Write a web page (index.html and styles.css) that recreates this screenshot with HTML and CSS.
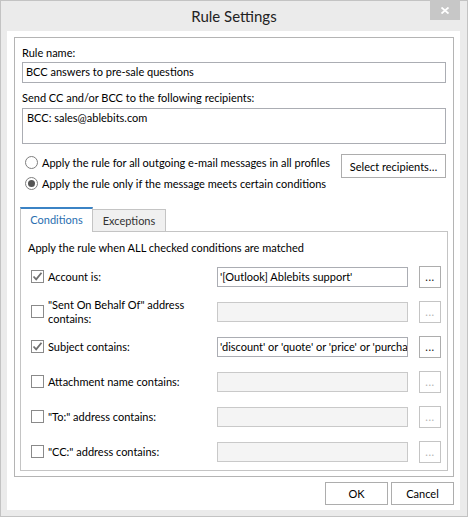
FILE: index.html
```html
<!DOCTYPE html>
<html>
<head>
<meta charset="utf-8">
<link rel="stylesheet" href="styles.css">
</head>
<body>
<div class="window">
  <div class="titlebar">
    <span class="spacer"></span>
    <div class="title">Rule Settings</div>
    <div class="close"><svg width="8" height="7" viewBox="0 0 8 7"><path d="M0.5 0.5 L7.5 6.5 M7.5 0.5 L0.5 6.5" stroke="#fff" stroke-width="1.8" fill="none"/></svg></div>
  </div>
  <div class="client">
    <div class="panel">
      <div class="label">Rule name:</div>
      <div class="field">BCC answers to pre-sale questions</div>
      <div class="label label-send">Send CC and/or BCC to the following recipients:</div>
      <div class="field area">BCC: sales@ablebits.com</div>
      <div class="options">
        <div class="radios">
          <div class="radio-row"><span class="radio"></span><span>Apply the rule for all outgoing e-mail messages in all profiles</span></div>
          <div class="radio-row"><span class="radio on"></span><span>Apply the rule only if the message meets certain conditions</span></div>
        </div>
        <div class="btn select-btn">Select recipients…</div>
      </div>
      <div class="tabs">
        <div class="tab active">Conditions</div>
        <div class="tab">Exceptions</div>
      </div>
      <div class="tabpage">
        <div class="heading">Apply the rule when ALL checked conditions are matched</div>
        <div class="row">
          <span class="check on"><svg width="11" height="11" viewBox="0 0 11 11"><path d="M1.5 5.5 L4.2 8.3 L9.5 1.8" stroke="#6f6f6f" stroke-width="1.8" fill="none"/></svg></span>
          <span class="rlabel">Account is:</span>
          <span class="input">'[Outlook] Ablebits support'</span>
          <span class="dots">...</span>
        </div>
        <div class="row">
          <span class="check"></span>
          <span class="rlabel two">"Sent On Behalf Of" address<br>contains:</span>
          <span class="input off"></span>
          <span class="dots off">...</span>
        </div>
        <div class="row">
          <span class="check on"><svg width="11" height="11" viewBox="0 0 11 11"><path d="M1.5 5.5 L4.2 8.3 L9.5 1.8" stroke="#6f6f6f" stroke-width="1.8" fill="none"/></svg></span>
          <span class="rlabel">Subject contains:</span>
          <span class="input">'discount' or 'quote' or 'price' or 'purchase'</span>
          <span class="dots">...</span>
        </div>
        <div class="row">
          <span class="check"></span>
          <span class="rlabel">Attachment name contains:</span>
          <span class="input off"></span>
          <span class="dots off">...</span>
        </div>
        <div class="row">
          <span class="check"></span>
          <span class="rlabel">"To:" address contains:</span>
          <span class="input off"></span>
          <span class="dots off">...</span>
        </div>
        <div class="row">
          <span class="check"></span>
          <span class="rlabel">"CC:" address contains:</span>
          <span class="input off"></span>
          <span class="dots off">...</span>
        </div>
      </div>
    </div>
    <div class="footer">
      <div class="btn foot-btn">OK</div>
      <div class="btn foot-btn">Cancel</div>
    </div>
  </div>
</div>
</body>
</html>
```

FILE: styles.css
```css
* { box-sizing: border-box; }
html, body { margin: 0; padding: 0; background: #ffffff; }
body {
  font-family: "Lato", "Open Sans", sans-serif;
  font-size: 11px;
  color: #000;
}
.window {
  width: 468px;
  height: 517px;
  background: #ebebeb;
  border: 1px solid #c3c3c3;
  display: flex;
  flex-direction: column;
}
.titlebar {
  height: 30px;
  display: grid;
  grid-template-columns: 1fr auto 1fr;
}
.title {
  font-size: 15px;
  line-height: 30px;
  color: #222;
}
.close {
  justify-self: end;
  width: 30px;
  height: 20px;
  margin-right: 7px;
  margin-top: -1px;
  background: #c7c7c7;
  display: flex;
  align-items: center;
  justify-content: center;
}
.client {
  margin: 0 7px 0 6px;
  height: 479px;
  background: #fff;
  padding: 6px 6px 0 7px;
}
.panel {
  border: 1px solid #b4b4b4;
  height: 440px;
  padding: 7px 7px 0 7px;
}
.label { line-height: 16px; height: 16px; }
.field {
  margin-top: 1px;
  height: 21px;
  border: 1px solid #abadb3;
  padding: 0 3px;
  line-height: 18px;
}
.label-send { margin-top: 7px; }
.area {
  margin-top: 2px;
  height: 36px;
  padding: 0 4px;
  line-height: 17px;
}
.options {
  margin-top: 8px;
  display: flex;
  justify-content: space-between;
  align-items: flex-start;
}
.radios { padding-left: 3px; }
.radio-row {
  height: 21px;
  display: flex;
  align-items: center;
  white-space: nowrap;
}
.radio {
  width: 13px;
  height: 13px;
  border: 1px solid #7e7e7e;
  border-radius: 50%;
  margin-right: 4px;
  display: flex;
  align-items: center;
  justify-content: center;
  flex: none;
}
.radio.on::after {
  content: "";
  width: 7px;
  height: 7px;
  border-radius: 50%;
  background: #555;
}
.btn {
  border: 1px solid #adadad;
  background: #fff;
  display: flex;
  align-items: center;
  justify-content: center;
  white-space: nowrap;
}
.select-btn {
  width: 105px;
  height: 24px;
  margin-top: 2px;
  flex: none;
}
.tabs {
  margin: 13px -2px -1px;
  height: 25px;
  display: flex;
  align-items: flex-end;
}
.tab {
  width: 73px;
  height: 23px;
  display: flex;
  align-items: center;
  justify-content: center;
  border: 1px solid #c4c4c4;
  border-left: 0;
  background: #f0f0f0;
  color: #333;
}
.tab.active {
  height: 25px;
  border-left: 1px solid #c4c4c4;
  border-top: 2px solid #3b83c5;
  border-bottom: 0;
  background: #fff;
  color: #2a6fb0;
  position: relative;
  z-index: 1;
  padding-bottom: 2px;
}
.tabpage {
  margin: 0 -2px;
  height: 240px;
  border: 1px solid #c4c4c4;
  padding: 0 6px 0 10px;
}
.heading {
  margin-top: 8px;
  margin-left: -3px;
  line-height: 16px;
  height: 16px;
}
.heading + .row { margin-top: 3px; }
.row {
  height: 35px;
  display: flex;
  align-items: center;
}
.check {
  width: 13px;
  height: 13px;
  border: 1px solid #8a8a8a;
  margin-right: 4px;
  flex: none;
  display: flex;
  align-items: center;
  justify-content: center;
}
.rlabel {
  width: 169px;
  line-height: 16px;
  flex: none;
}
.rlabel.two { line-height: 14px; }
.input {
  width: 191px;
  height: 20px;
  margin-right: 11px;
  margin-top: 1px;
  border: 1px solid #abadb3;
  padding: 0 2px;
  line-height: 18px;
  white-space: nowrap;
  overflow: hidden;
  text-overflow: clip;
  flex: none;
}
.input.off {
  background: #f4f4f4;
  border-color: #c9c9c9;
}
.dots {
  width: 22px;
  height: 22px;
  border: 1px solid #adadad;
  text-align: center;
  line-height: 20px;
  flex: none;
  color: #111;
  font-size: 11px;
  letter-spacing: 0.5px;
}
.dots.off { color: #b4b4b4; border-color: #c4c4c4; }
.footer {
  margin-top: 5px;
  display: flex;
  justify-content: flex-end;
  gap: 3px;
}
.foot-btn {
  width: 63px;
  height: 23px;
}
```
